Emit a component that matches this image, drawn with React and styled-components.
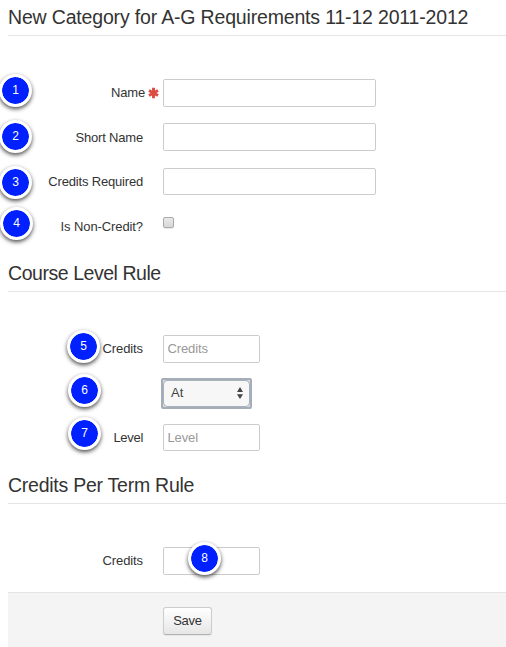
import React from "react";
import styled, { createGlobalStyle } from "styled-components";

const GlobalStyle = createGlobalStyle`
  *, *::before, *::after { box-sizing: border-box; }
  body {
    margin: 0;
    background: #fff;
    color: #333;
    font: 13px/18px "Liberation Sans", Arial, sans-serif;
    overflow: hidden;
  }
`;

const Page = styled.main`
  height: 647px;
  padding-left: 8px;
  display: flex;
  flex-direction: column;
`;

const Heading = styled.h2`
  margin: 0;
  height: ${(p) => p.$height}px;
  padding-bottom: 5px;
  display: flex;
  align-items: flex-end;
  border-bottom: 1px solid #e5e5e5;
  font-size: 19.5px;
  line-height: 26px;
  font-weight: 400;
  letter-spacing: ${(p) => p.$tracking || 0}px;
  white-space: nowrap;
`;

const Fields = styled.div`
  height: ${(p) => p.$height}px;
  padding-top: 43px;
  display: flex;
  flex-direction: column;
  gap: 16.5px;
`;

const Row = styled.div`
  position: relative;
  flex: none;
  height: 28px;
  display: grid;
  grid-template-columns: 135px 1fr;
  grid-template-rows: 28px;
  column-gap: 20px;
  align-items: center;
`;

const Label = styled.label`
  justify-self: end;
  display: flex;
  align-items: center;
  gap: 3px;
  margin-right: ${(p) => (p.$required ? -16 : 0)}px;
  letter-spacing: ${(p) => p.$tracking ?? -0.18}px;
  white-space: nowrap;
`;

const Input = styled.input`
  width: ${(p) => (p.$short ? 97 : 213)}px;
  height: ${(p) => p.$height || 28}px;
  align-self: start;
  margin: ${(p) => p.$shift || 0}px 0 0;
  padding: 0 3.5px 1px;
  border: 1px solid #ccc;
  border-radius: 2px;
  background: #fff;
  color: #555;
  font: inherit;
  letter-spacing: -0.12px;
  outline: none;
  &::placeholder { color: #999; opacity: 1; }
`;

const Checkbox = styled.input.attrs({ type: "checkbox" })`
  appearance: none;
  width: 11px;
  height: 11px;
  margin: 0 0 8px;
  border: 1px solid #aaa;
  border-radius: 2px;
  background: linear-gradient(#e9e9e9, #d8d8d8);
  box-shadow: 0 1px 1px rgba(0, 0, 0, 0.08);
`;

const SelectFrame = styled.div`
  width: 91px;
  height: 31px;
  align-self: start;
  margin: -1.5px 0 0 -2px;
  padding: 1px;
  border: 2px solid #a4adb8;
  border-radius: 2px;
  background: #d5d9df;
`;

const SelectButton = styled.button`
  width: 100%;
  height: 100%;
  padding: 0 6px 1px 7px;
  display: flex;
  align-items: center;
  justify-content: space-between;
  border: 0;
  border-radius: 4px;
  background: #f7f7f7;
  box-shadow: 0 0 0 1px #a9b1bb;
  color: #444;
  font: inherit;
`;

const Marker = styled.span`
  position: absolute;
  z-index: 1;
  left: ${(p) => p.$x}px;
  top: ${(p) => p.$y}px;
  width: 33px;
  height: 33px;
  display: flex;
  align-items: center;
  justify-content: center;
  padding-bottom: 1px;
  border: 3px solid #fff;
  border-radius: 50%;
  background: #0020ff;
  background-clip: padding-box;
  box-shadow: 0 2px 4px rgba(0, 0, 0, 0.7);
  color: #fff;
  font-size: 12px;
  line-height: 14px;
`;

const Footer = styled.footer`
  flex: 1;
  padding: 14px 0 0 155px;
  border-top: 1px solid #e5e5e5;
  background: #f4f4f4;
`;

const SaveButton = styled.button`
  display: block;
  width: 49px;
  height: 28px;
  padding: 0;
  border: 1px solid #ccc;
  border-bottom-color: #b3b3b3;
  border-radius: 3px;
  background: linear-gradient(#fff, #e6e6e6);
  box-shadow: 0 1px 1px rgba(0, 0, 0, 0.06);
  color: #333;
  font: inherit;
  letter-spacing: -0.25px;
`;

const RequiredIcon = () => (
  <svg width="11" height="12" viewBox="0 0 11 12" aria-hidden="true">
    <path
      d="M5.5 .7v10.6M1 3.4l9 5.2M1 8.6l9-5.2"
      stroke="#dd4b42"
      strokeWidth="2.9"
    />
  </svg>
);

const Arrows = () => (
  <svg width="6" height="12" viewBox="0 0 6 12" aria-hidden="true">
    <path d="M0 5 3 0l3 5zM0 7.2h6l-3 4.8z" fill="#444" />
  </svg>
);

export default function App() {
  return (
    <>
      <GlobalStyle />
      <Page>
        <Heading $height={36} $tracking={-0.17}>
          New Category for A-G Requirements 11-12 2011-2012
        </Heading>
        <Fields $height={219}>
          <Row>
            <Marker $x={-9} $y={-5}>1</Marker>
            <Label $required>Name <RequiredIcon /></Label>
            <Input aria-label="Name" />
          </Row>
          <Row>
            <Marker $x={-9} $y={-3.5}>2</Marker>
            <Label>Short Name</Label>
            <Input $shift={-0.5} aria-label="Short Name" />
          </Row>
          <Row>
            <Marker $x={-9} $y={-2}>3</Marker>
            <Label>Credits Required</Label>
            <Input $height={27} aria-label="Credits Required" />
          </Row>
          <Row>
            <Marker $x={-8} $y={-5.5}>4</Marker>
            <Label $tracking={-0.1}>Is Non-Credit?</Label>
            <Checkbox aria-label="Is Non-Credit?" />
          </Row>
        </Fields>
        <Heading $height={37} $tracking={-0.45}>Course Level Rule</Heading>
        <Fields $height={175}>
          <Row>
            <Marker $x={59} $y={-5}>5</Marker>
            <Label $tracking={-0.1}>Credits</Label>
            <Input $short placeholder="Credits" />
          </Row>
          <Row>
            <Marker $x={60} $y={-5.5}>6</Marker>
            <span />
            <SelectFrame>
              <SelectButton type="button">At <Arrows /></SelectButton>
            </SelectFrame>
          </Row>
          <Row>
            <Marker $x={60} $y={-7}>7</Marker>
            <Label $tracking={-0.3}>Level</Label>
            <Input $short $height={27} placeholder="Level" />
          </Row>
        </Fields>
        <Heading $height={37} $tracking={-0.25}>Credits Per Term Rule</Heading>
        <Fields $height={88}>
          <Row>
            <Marker $x={180} $y={-5}>8</Marker>
            <Label $tracking={-0.1}>Credits</Label>
            <Input $short aria-label="Credits per term" />
          </Row>
        </Fields>
        <Footer>
          <SaveButton type="button">Save</SaveButton>
        </Footer>
      </Page>
    </>
  );
}
